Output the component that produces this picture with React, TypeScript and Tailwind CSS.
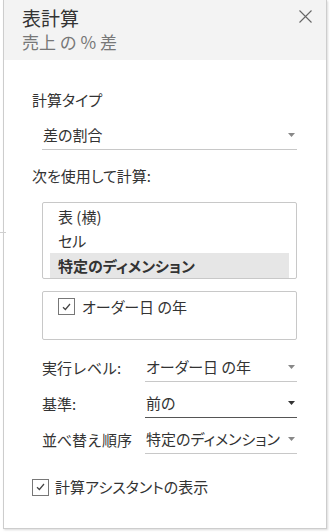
import React from "react";

const font = {
  fontFamily: '"Noto Sans CJK JP", "Noto Sans", sans-serif',
  fontFeatureSettings: '"palt"',
};

function Arrow({ dark }: { dark?: boolean }) {
  return (
    <svg width="7" height="4" viewBox="0 0 7 4" className="shrink-0">
      <path d="M0 0 L7 0 L3.5 4 Z" fill={dark ? "#333" : "#888"} />
    </svg>
  );
}

function Check() {
  return (
    <div className="w-[17px] h-[17px] border border-[#777] bg-white flex items-center justify-center shrink-0">
      <svg width="9" height="8" viewBox="0 0 9 8">
        <path d="M1 4.2 L3.4 6.5 L8 1" fill="none" stroke="#444" strokeWidth="1.2" />
      </svg>
    </div>
  );
}

function Row({ label, value, dark, first }: { label: string; value: string; dark?: boolean; first?: boolean }) {
  return (
    <div className={`flex h-[25px] ${first ? "mt-[17px]" : "mt-[11px]"}`}>
      <div className="w-[103px] flex items-center pb-[4px] whitespace-nowrap [font-feature-settings:normal]">{label}</div>
      <div
        className={`flex-1 border-b ${dark ? "border-[#555]" : "border-[#c8c8c8]"} flex items-center justify-between pl-[1px] pr-[2px] pb-[4px] whitespace-nowrap`}
      >
        <span>{value}</span>
        <Arrow dark={dark} />
      </div>
    </div>
  );
}

export default function App() {
  return (
    <div className="w-[330px] h-[532px] bg-white relative overflow-hidden" style={font}>
      <div className="absolute left-0 top-[232px] w-[6px] h-px bg-[#cfcfcf]" />
      <div className="ml-[3px] w-[324px] h-[529px] border-l border-r border-b border-[#cdcdcd] shadow-[1px_1px_2px_rgba(0,0,0,0.15)] flex flex-col text-[#333]">
        <div className="h-[60px] shrink-0 bg-[#f3f3f3] flex justify-between pl-[18px] pr-[14px] pt-[6px] [font-feature-settings:normal]">
          <div className="flex flex-col">
            <div className="text-[19px] leading-[24px] text-[#333]">表計算</div>
            <div className="text-[17px] leading-[22px] mt-[1px] text-[#777]">売上 の % 差</div>
          </div>
          <svg width="13" height="13" viewBox="0 0 13 13" className="mt-[4px]">
            <path d="M0.5 0.5 L12.5 12.5 M12.5 0.5 L0.5 12.5" stroke="#666" strokeWidth="1.1" />
          </svg>
        </div>
        <div className="flex flex-col pl-[28px] pr-[29px] text-[15px] leading-[20px]">
          <div className="mt-[30px] h-[20px]">計算タイプ</div>
          <div className="ml-[10px] mt-[11px] h-[29px] border-b border-[#c8c8c8] flex items-center justify-between pl-[1px] pr-[2px]">
            <span>差の割合</span>
            <Arrow />
          </div>
          <div className="mt-[16px] h-[20px]">次を使用して計算:</div>
          <div className="ml-[10px] mt-[16px] h-[77px] border border-[#c8c8c8] rounded-[2px] flex flex-col px-[7px] pt-[1px] overflow-hidden">
            <div className="h-[25px] shrink-0 flex items-center pl-[8px]">表 (横)</div>
            <div className="h-[24px] shrink-0 flex items-center pl-[8px]">セル</div>
            <div className="h-[25px] shrink-0 flex items-center pl-[8px] bg-[#e6e6e6] font-bold">特定のディメンション</div>
          </div>
          <div className="ml-[10px] mt-[12px] h-[49px] border border-[#c8c8c8] rounded-[2px] flex items-start pl-[15px] pt-[6px] gap-[7px]">
            <Check />
            <span className="-mt-[1px]">オーダー日 の年</span>
          </div>
          <div className="ml-[10px] flex flex-col">
            <Row first label="実行レベル:" value="オーダー日 の年" />
            <Row label="基準:" value="前の" dark />
            <Row label="並べ替え順序" value="特定のディメンション" />
          </div>
          <div className="mt-[23px] h-[20px] flex items-center gap-[6px]">
            <Check />
            <span>計算アシスタントの表示</span>
          </div>
        </div>
      </div>
    </div>
  );
}
